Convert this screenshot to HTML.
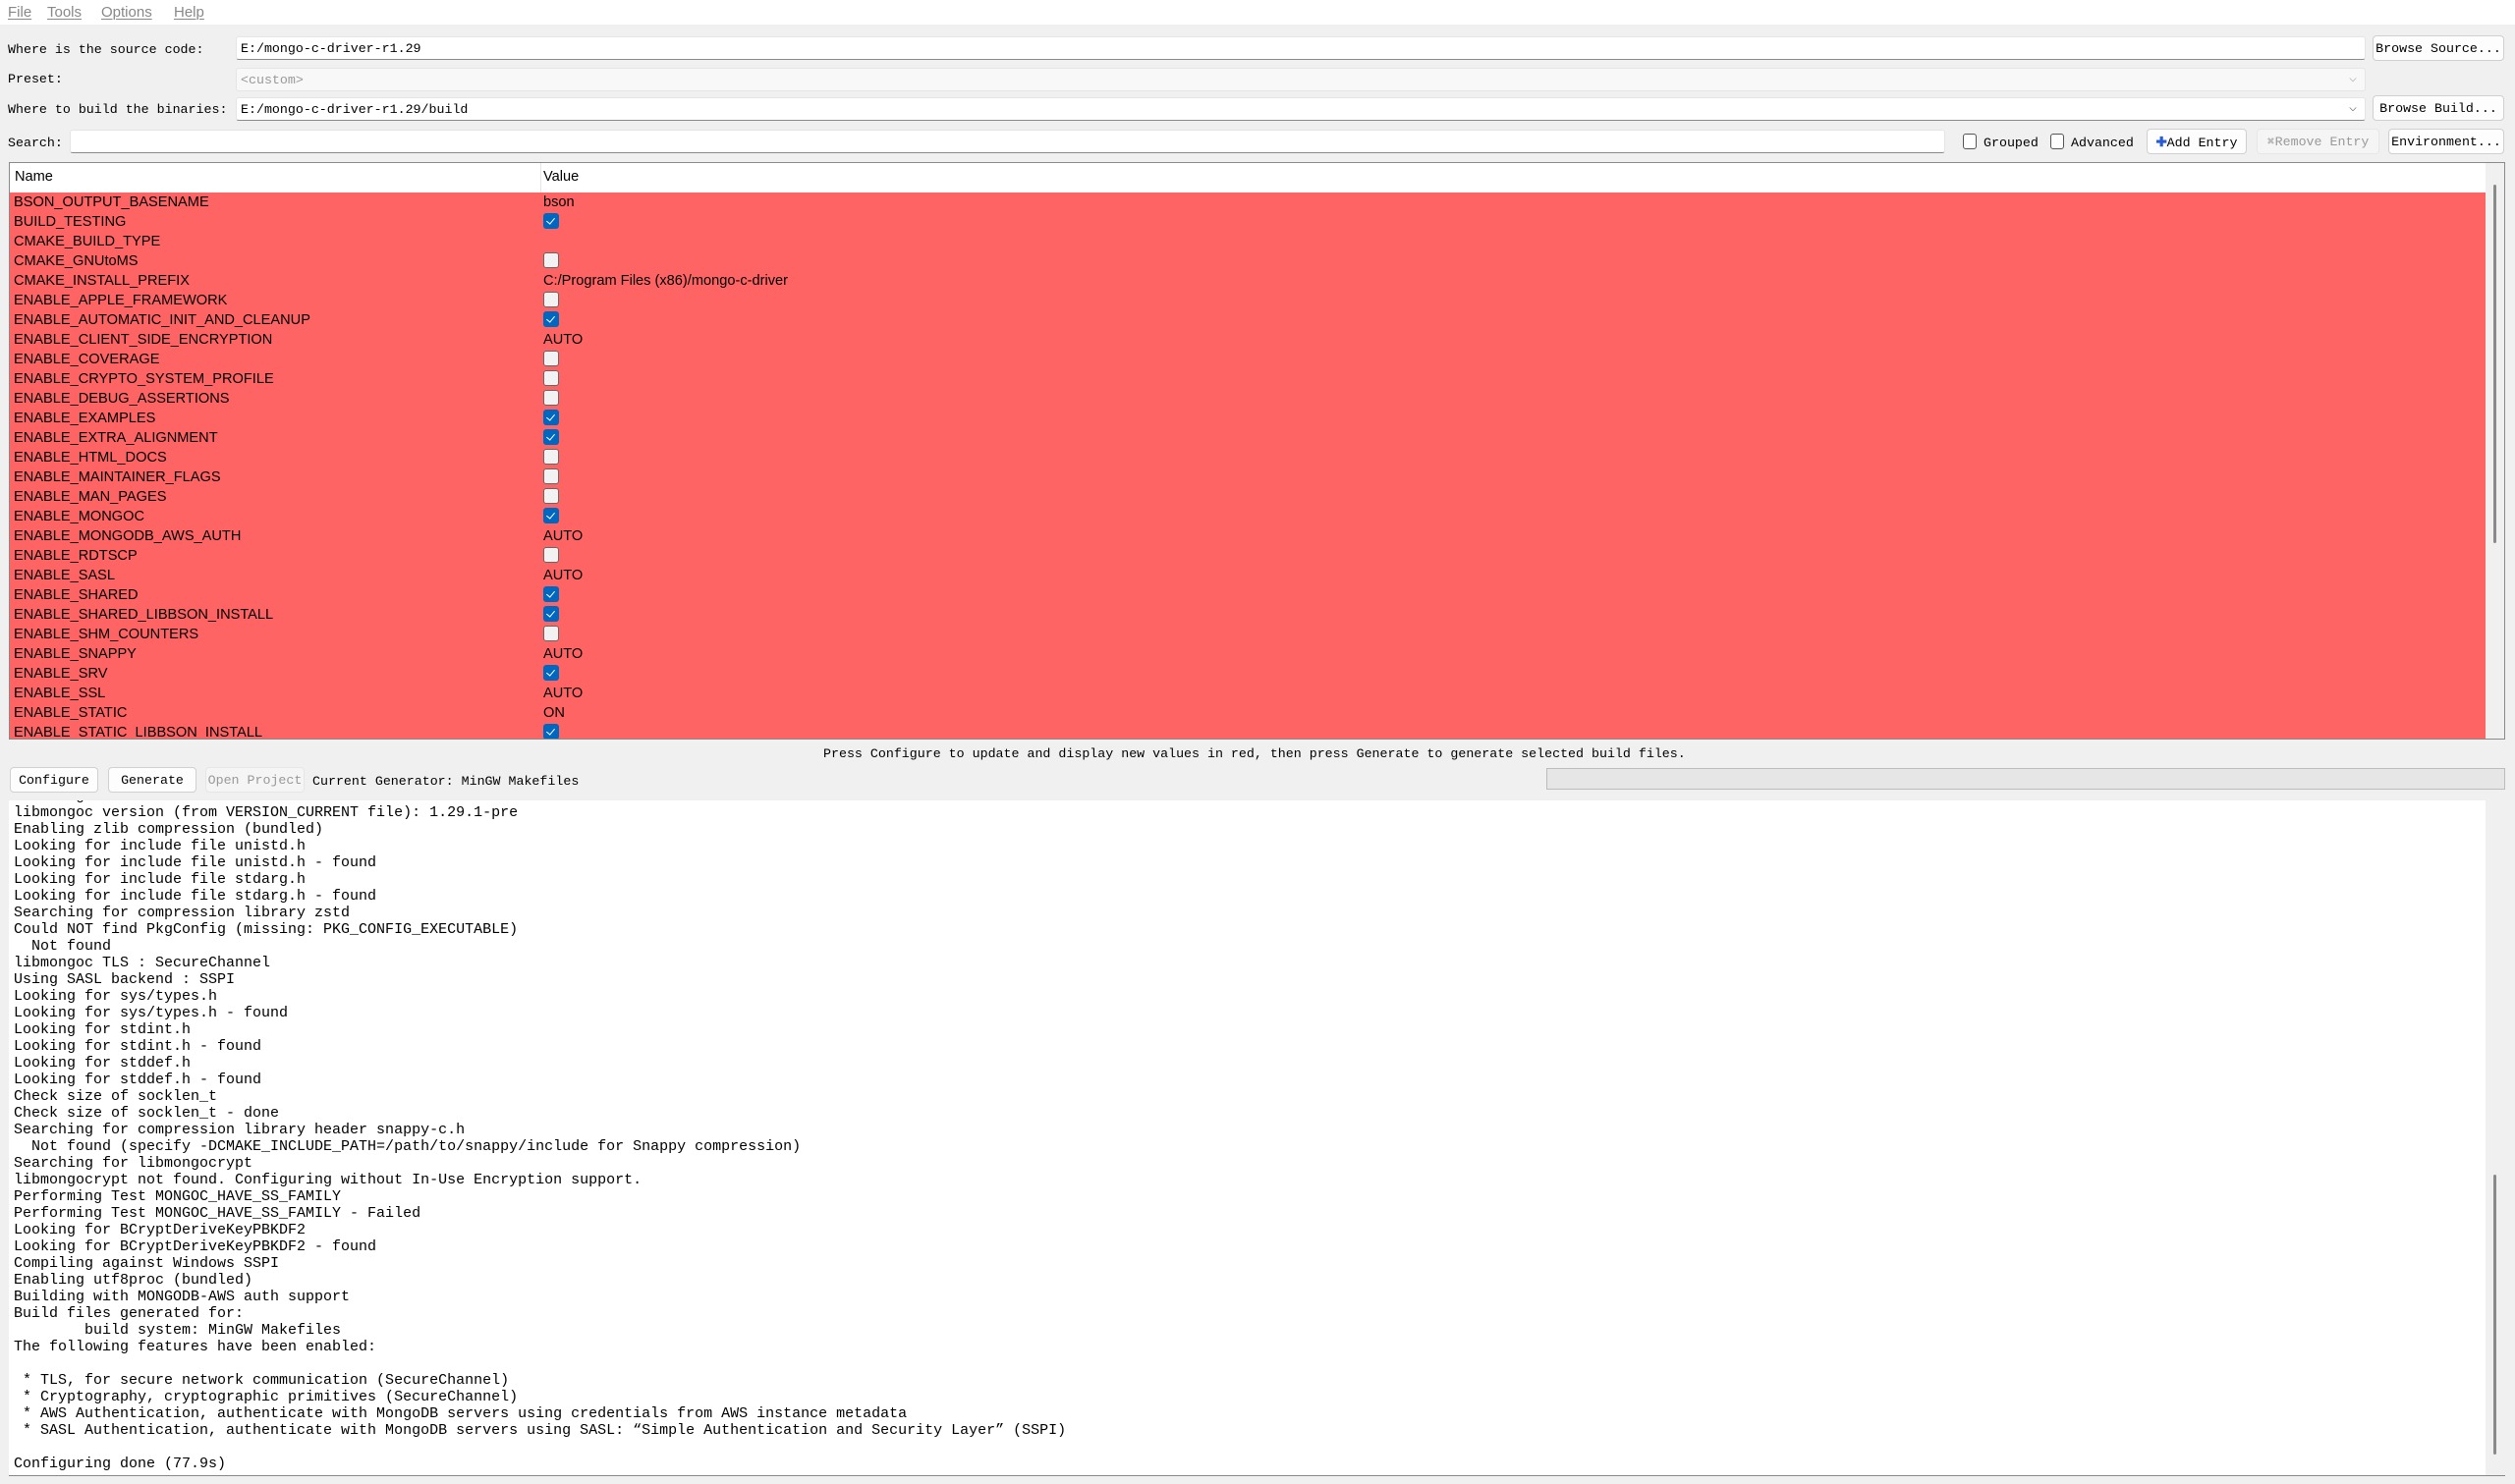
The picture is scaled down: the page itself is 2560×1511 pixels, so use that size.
<!DOCTYPE html>
<html><head><meta charset="utf-8"><style>
*{box-sizing:border-box;margin:0;padding:0}
body{width:2560px;height:1511px;background:#f0f0f0;position:relative;overflow:hidden;font-family:"Liberation Mono",monospace;font-size:13.3px;color:#000}
.a{position:absolute;white-space:pre}
.menu{position:absolute;left:0;top:0;width:2560px;height:25px;background:#fff;font-family:"Liberation Sans",sans-serif;font-size:15px;color:#888}
.menu span{position:absolute;top:4px;text-decoration:underline;text-decoration-thickness:1px;text-underline-offset:2px}
.inp{position:absolute;background:#fff;border:1px solid #e5e5e5;border-bottom:1px solid #8a8a8a;border-radius:3px;padding:4px 0 0 4px;height:24px}
.btn{position:absolute;background:#fdfdfd;border:1px solid #d0d0d0;border-radius:4px;text-align:center;padding-top:5px;height:26px}
.cb{position:absolute;width:14px;height:16px;border:1px solid #555;border-radius:3px;background:#fff}
#tbl{position:absolute;left:9px;top:165px;width:2541px;height:588px;border:1px solid #8a8a8a;background:#fff;overflow:hidden;font-family:"Liberation Sans",sans-serif;font-size:14.6px}
.hd{position:absolute;left:0;top:0;height:30px;width:2520px;background:#fff}
.row{position:absolute;left:0;width:2520px;height:20px;background:#ff6464}
.row .n{position:absolute;left:4px;top:2px}
.row .v{position:absolute;left:543px;top:2px}
.ck{position:absolute;left:543px;top:1px;width:16px;height:16px;border-radius:3px}
.on{background:#0067c0}
.on::after{content:"";position:absolute;left:5px;top:3px;width:4px;height:7px;border:solid #fff;border-width:0 1.3px 1.3px 0;transform:rotate(40deg)}
.off{background:#f2f2f2;border:1px solid #666}
#log{position:absolute;left:9px;top:815px;width:2541px;height:688px;background:#fff;border-bottom:1px solid #888;overflow:hidden;font-size:15px}
#log pre{position:absolute;left:5px;top:-13px;font-family:"Liberation Mono",monospace;font-size:15px;line-height:17px}
</style></head><body>
<div class="menu"><span style="left:8px">File</span><span style="left:48px">Tools</span><span style="left:103px">Options</span><span style="left:177px">Help</span></div>

<div class="a" style="left:8px;top:43px">Where is the source code:</div>
<div class="inp" style="left:240px;top:37px;width:2168px">E:/mongo-c-driver-r1.29</div>
<div class="btn" style="left:2415px;top:36px;width:134px">Browse Source...</div>

<div class="a" style="left:8px;top:73px">Preset:</div>
<div class="inp" style="left:240px;top:69px;width:2168px;background:#f8f8f8;border-bottom-color:#e5e5e5;color:#999">&lt;custom&gt;<span style="position:absolute;right:8px;top:2px;color:#aaa">⌵</span></div>

<div class="a" style="left:8px;top:104px">Where to build the binaries:</div>
<div class="inp" style="left:240px;top:99px;width:2168px">E:/mongo-c-driver-r1.29/build<span style="position:absolute;right:8px;top:2px;color:#666">⌵</span></div>
<div class="btn" style="left:2415px;top:97px;width:134px">Browse Build...</div>

<div class="a" style="left:8px;top:138px">Search:</div>
<div class="inp" style="left:71px;top:132px;width:1909px"></div>
<div class="cb" style="left:1998px;top:136px"></div><div class="a" style="left:2019px;top:138px">Grouped</div>
<div class="cb" style="left:2087px;top:136px"></div><div class="a" style="left:2108px;top:138px">Advanced</div>
<div class="btn" style="left:2185px;top:131px;width:102px"><span style="color:#2a5bd0;font-weight:bold;font-family:'Liberation Sans'">✚</span>Add Entry</div>
<div class="btn" style="left:2297px;top:131px;width:125px;background:#f5f5f5;border-color:#e6e6e6;color:#999"><span style="color:#bbb">✖</span>Remove Entry</div>
<div class="btn" style="left:2431px;top:131px;width:118px">Environment...</div>

<div id="tbl">
<div class="hd"><span class="a" style="left:5px;top:6px">Name</span><span class="a" style="left:543px;top:6px">Value</span><div style="position:absolute;left:540px;top:0;width:1px;height:30px;background:#e5e5e5"></div></div>
<div class="row" style="top:30px"><span class="n">BSON_OUTPUT_BASENAME</span><span class="v">bson</span></div>
<div class="row" style="top:50px"><span class="n">BUILD_TESTING</span><span class="ck on"></span></div>
<div class="row" style="top:70px"><span class="n">CMAKE_BUILD_TYPE</span></div>
<div class="row" style="top:90px"><span class="n">CMAKE_GNUtoMS</span><span class="ck off"></span></div>
<div class="row" style="top:110px"><span class="n">CMAKE_INSTALL_PREFIX</span><span class="v">C:/Program Files (x86)/mongo-c-driver</span></div>
<div class="row" style="top:130px"><span class="n">ENABLE_APPLE_FRAMEWORK</span><span class="ck off"></span></div>
<div class="row" style="top:150px"><span class="n">ENABLE_AUTOMATIC_INIT_AND_CLEANUP</span><span class="ck on"></span></div>
<div class="row" style="top:170px"><span class="n">ENABLE_CLIENT_SIDE_ENCRYPTION</span><span class="v">AUTO</span></div>
<div class="row" style="top:190px"><span class="n">ENABLE_COVERAGE</span><span class="ck off"></span></div>
<div class="row" style="top:210px"><span class="n">ENABLE_CRYPTO_SYSTEM_PROFILE</span><span class="ck off"></span></div>
<div class="row" style="top:230px"><span class="n">ENABLE_DEBUG_ASSERTIONS</span><span class="ck off"></span></div>
<div class="row" style="top:250px"><span class="n">ENABLE_EXAMPLES</span><span class="ck on"></span></div>
<div class="row" style="top:270px"><span class="n">ENABLE_EXTRA_ALIGNMENT</span><span class="ck on"></span></div>
<div class="row" style="top:290px"><span class="n">ENABLE_HTML_DOCS</span><span class="ck off"></span></div>
<div class="row" style="top:310px"><span class="n">ENABLE_MAINTAINER_FLAGS</span><span class="ck off"></span></div>
<div class="row" style="top:330px"><span class="n">ENABLE_MAN_PAGES</span><span class="ck off"></span></div>
<div class="row" style="top:350px"><span class="n">ENABLE_MONGOC</span><span class="ck on"></span></div>
<div class="row" style="top:370px"><span class="n">ENABLE_MONGODB_AWS_AUTH</span><span class="v">AUTO</span></div>
<div class="row" style="top:390px"><span class="n">ENABLE_RDTSCP</span><span class="ck off"></span></div>
<div class="row" style="top:410px"><span class="n">ENABLE_SASL</span><span class="v">AUTO</span></div>
<div class="row" style="top:430px"><span class="n">ENABLE_SHARED</span><span class="ck on"></span></div>
<div class="row" style="top:450px"><span class="n">ENABLE_SHARED_LIBBSON_INSTALL</span><span class="ck on"></span></div>
<div class="row" style="top:470px"><span class="n">ENABLE_SHM_COUNTERS</span><span class="ck off"></span></div>
<div class="row" style="top:490px"><span class="n">ENABLE_SNAPPY</span><span class="v">AUTO</span></div>
<div class="row" style="top:510px"><span class="n">ENABLE_SRV</span><span class="ck on"></span></div>
<div class="row" style="top:530px"><span class="n">ENABLE_SSL</span><span class="v">AUTO</span></div>
<div class="row" style="top:550px"><span class="n">ENABLE_STATIC</span><span class="v">ON</span></div>
<div class="row" style="top:570px"><span class="n">ENABLE_STATIC_LIBBSON_INSTALL</span><span class="ck on"></span></div>
<div style="position:absolute;left:2520px;top:0;width:20px;height:588px;background:#f0f0f0"></div>
<div style="position:absolute;left:2528px;top:22px;width:3px;height:365px;background:#8a8a8a;border-radius:2px"></div>
</div>

<div class="a" style="left:838px;top:760px">Press Configure to update and display new values in red, then press Generate to generate selected build files.</div>

<div class="btn" style="left:10px;top:781px;width:90px;height:26px">Configure</div>
<div class="btn" style="left:110px;top:781px;width:90px;height:26px">Generate</div>
<div class="btn" style="left:209px;top:781px;width:101px;height:26px;background:#f5f5f5;border-color:#e6e6e6;color:#999">Open Project</div>
<div class="a" style="left:318px;top:788px">Current Generator: MinGW Makefiles</div>
<div style="position:absolute;left:1574px;top:782px;width:976px;height:22px;background:#e6e6e6;border:1px solid #bcbcbc"></div>

<div id="log"><pre>Checking for module 'zstd'
libmongoc version (from VERSION_CURRENT file): 1.29.1-pre
Enabling zlib compression (bundled)
Looking for include file unistd.h
Looking for include file unistd.h - found
Looking for include file stdarg.h
Looking for include file stdarg.h - found
Searching for compression library zstd
Could NOT find PkgConfig (missing: PKG_CONFIG_EXECUTABLE)
  Not found
libmongoc TLS : SecureChannel
Using SASL backend : SSPI
Looking for sys/types.h
Looking for sys/types.h - found
Looking for stdint.h
Looking for stdint.h - found
Looking for stddef.h
Looking for stddef.h - found
Check size of socklen_t
Check size of socklen_t - done
Searching for compression library header snappy-c.h
  Not found (specify -DCMAKE_INCLUDE_PATH=/path/to/snappy/include for Snappy compression)
Searching for libmongocrypt
libmongocrypt not found. Configuring without In-Use Encryption support.
Performing Test MONGOC_HAVE_SS_FAMILY
Performing Test MONGOC_HAVE_SS_FAMILY - Failed
Looking for BCryptDeriveKeyPBKDF2
Looking for BCryptDeriveKeyPBKDF2 - found
Compiling against Windows SSPI
Enabling utf8proc (bundled)
Building with MONGODB-AWS auth support
Build files generated for:
        build system: MinGW Makefiles
The following features have been enabled:

 * TLS, for secure network communication (SecureChannel)
 * Cryptography, cryptographic primitives (SecureChannel)
 * AWS Authentication, authenticate with MongoDB servers using credentials from AWS instance metadata
 * SASL Authentication, authenticate with MongoDB servers using SASL: “Simple Authentication and Security Layer” (SSPI)

Configuring done (77.9s)</pre>
<div style="position:absolute;left:2521px;top:0;width:20px;height:688px;background:#f0f0f0"></div>
<div style="position:absolute;left:2529px;top:381px;width:3px;height:285px;background:#8a8a8a;border-radius:2px"></div>
</div>
</body></html>
